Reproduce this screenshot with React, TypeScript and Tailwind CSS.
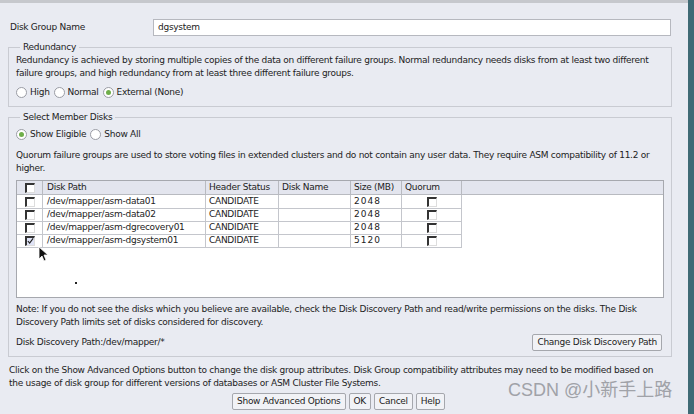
import React from "react";

const font = { fontFamily: '"DejaVu Sans", "Liberation Sans", sans-serif' };

function Radio({ checked, label }: { checked?: boolean; label: string }) {
  return (
    <span className="flex items-center gap-[3px]">
      <span className="w-[11px] h-[11px] rounded-full border border-[#9a9ca4] bg-white flex items-center justify-center">
        {checked && <span className="w-[5px] h-[5px] rounded-full bg-[#6fae4a]" />}
      </span>
      <span>{label}</span>
    </span>
  );
}

function Box({ checked, selected }: { checked?: boolean; selected?: boolean }) {
  return (
    <span
      className={`w-[10px] h-[10px] border-t-2 border-l-2 border-b border-r border-t-[#333] border-l-[#333] border-b-[#ddd] border-r-[#ddd] flex items-center justify-center ${
        selected ? "bg-[#dfe3f6]" : "bg-white"
      }`}
    >
      {checked && (
        <svg width="8" height="8" viewBox="0 0 8 8">
          <path d="M1 4 L3 6.5 L7 1" stroke="#222" strokeWidth="1.3" fill="none" />
        </svg>
      )}
    </span>
  );
}

function Btn({ children }: { children: React.ReactNode }) {
  return (
    <button className="h-[17px] px-[4px] border border-[#a5a7ad] rounded-[2px] bg-[#f1f2f6] text-[9px] text-[#222] leading-none whitespace-nowrap">
      {children}
    </button>
  );
}

const rows = [
  { path: "/dev/mapper/asm-data01", size: "2048" },
  { path: "/dev/mapper/asm-data02", size: "2048" },
  { path: "/dev/mapper/asm-dgrecovery01", size: "2048" },
  { path: "/dev/mapper/asm-dgsystem01", size: "5120", checked: true },
];

const cols = "grid grid-cols-[26px_163px_73px_72px_51px_60px_1fr]";

export default function App() {
  return (
    <div
      className="relative w-[694px] h-[414px] bg-[#e9ebf2] flex items-start overflow-hidden text-[#222] text-[9px] leading-[13px] tracking-[-0.27px]"
      style={font}
    >
      <div className="flex-1 flex flex-col">
        <div className="h-[3px] bg-[#c6c8cd]" />
        <div className="flex flex-col px-[8px] pt-[16px]">
          <div className="flex items-center pr-[9px]">
            <span className="w-[145px] pl-[2px]">Disk Group Name</span>
            <div className="flex-1 h-[17px] bg-white border border-[#b6b8bf] px-[4px] flex items-center">dgsystem</div>
          </div>

          <fieldset className="mt-[5px] mr-[8px] border border-[#c9cbd2] px-[7px] pb-[7px]">
            <legend className="ml-[4px] px-[3px]">Redundancy</legend>
            <p>
              Redundancy is achieved by storing multiple copies of the data on different failure groups. Normal redundancy needs disks from at least two different failure groups, and high redundancy from at least three different failure groups.
            </p>
            <div className="flex gap-[4px] mt-[6px]">
              <Radio label="High" />
              <Radio label="Normal" />
              <Radio label="External (None)" checked />
            </div>
          </fieldset>

          <fieldset className="mt-[4px] mr-[8px] border border-[#c9cbd2] px-[7px] pb-[5px]">
            <legend className="ml-[4px] px-[3px]">Select Member Disks</legend>
            <div className="flex gap-[4px] mt-[4px]">
              <Radio label="Show Eligible" checked />
              <Radio label="Show All" />
            </div>
            <p className="mt-[8px]">
              Quorum failure groups are used to store voting files in extended clusters and do not contain any user data. They require ASM compatibility of 11.2 or higher.
            </p>
            <div className="relative mt-[5px] h-[118px] bg-white border border-[#a6a8ae]">
              <div className={`${cols} h-[14px] bg-[#e3e5ee] border-b border-[#b8bac0]`}>
                <div className="flex items-center justify-center border-r border-[#b8bac0]"><Box /></div>
                <div className="pl-[4px] border-r border-[#b8bac0]">Disk Path</div>
                <div className="pl-[3px] border-r border-[#b8bac0]">Header Status</div>
                <div className="pl-[3px] border-r border-[#b8bac0]">Disk Name</div>
                <div className="pl-[3px] border-r border-[#b8bac0]">Size (MB)</div>
                <div className="pl-[3px] border-r border-[#b8bac0]">Quorum</div>
                <div />
              </div>
              {rows.map((r) => (
                <div key={r.path} className={`${cols} h-[13px]`}>
                  <div className="flex items-center justify-center border-r border-b border-[#c4c6cc]">
                    <Box checked={r.checked} selected={r.checked} />
                  </div>
                  <div className="pl-[4px] border-r border-b border-[#c4c6cc] whitespace-nowrap">{r.path}</div>
                  <div className="pl-[3px] border-r border-b border-[#c4c6cc]">CANDIDATE</div>
                  <div className="border-r border-b border-[#c4c6cc]" />
                  <div className="pl-[3px] border-r border-b border-[#c4c6cc] tracking-[1px]">{r.size}</div>
                  <div className="flex items-center justify-center border-r border-b border-[#c4c6cc]"><Box /></div>
                  <div />
                </div>
              ))}
              <svg className="absolute left-[21px] top-[65px]" width="10" height="16" viewBox="0 0 10 16">
                <path d="M1 1 L1 13 L4 10 L6 15 L8 14 L6 9 L10 9 Z" fill="#111" stroke="#fff" strokeWidth="0.8" />
              </svg>
              <span className="absolute left-[58px] top-[101px] w-[2px] h-[2px] bg-[#222]" />
            </div>
            <p className="mt-[5px]">
              Note: If you do not see the disks which you believe are available, check the Disk Discovery Path and read/write permissions on the disks. The Disk Discovery Path limits set of disks considered for discovery.
            </p>
            <div className="flex items-center justify-between mt-[5px] pr-[2px]">
              <span>Disk Discovery Path:/dev/mapper/*</span>
              <Btn>Change Disk Discovery Path</Btn>
            </div>
          </fieldset>

          <p className="mt-[7px] pl-[1px] pr-[20px]">
            Click on the Show Advanced Options button to change the disk group attributes. Disk Group compatibility attributes may need to be modified based on the usage of disk group for different versions of databases or ASM Cluster File Systems.
          </p>
          <div className="flex gap-[3px] mt-[3px] pl-[224px]">
            <Btn>Show Advanced Options</Btn>
            <Btn>OK</Btn>
            <Btn>Cancel</Btn>
            <Btn>Help</Btn>
          </div>
        </div>
      </div>
      <div className="self-stretch w-[6px] bg-[#3f6a75]" />
      <span
        className="absolute left-[508px] top-[381px] text-[18px] leading-none tracking-normal text-[#a0a2a8] whitespace-nowrap"
        style={{ fontFamily: '"Liberation Sans", "Noto Sans CJK SC", sans-serif' }}
      >
        CSDN @小新手上路
      </span>
    </div>
  );
}
